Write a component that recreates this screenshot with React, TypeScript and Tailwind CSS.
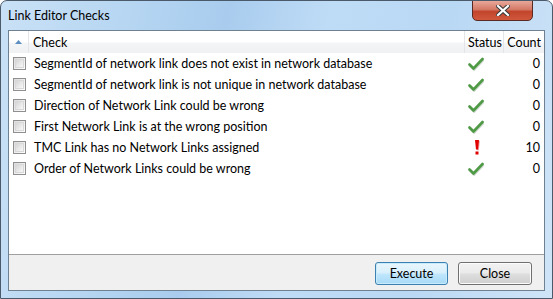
const checks = [
  { label: "SegmentId of network link does not exist in network database", ok: true, count: 0 },
  { label: "SegmentId of network link is not unique in network database", ok: true, count: 0 },
  { label: "Direction of Network Link could be wrong", ok: true, count: 0 },
  { label: "First Network Link is at the wrong position", ok: true, count: 0 },
  { label: "TMC Link has no Network Links assigned", ok: false, count: 10 },
  { label: "Order of Network Links could be wrong", ok: true, count: 0 },
];

function CheckMark() {
  return (
    <svg width="16" height="14" viewBox="0 0 16 14">
      <path d="M1.5 7.5 L5.5 11.5 L14.5 2" fill="none" stroke="#cfd8cf" strokeWidth="3" strokeLinecap="round" transform="translate(0.6 0.8)" />
      <path d="M1.5 7.5 L5.5 11.5 L14.5 2" fill="none" stroke="#4f9a45" strokeWidth="2.6" strokeLinecap="round" strokeLinejoin="round" />
    </svg>
  );
}

function Exclaim() {
  return (
    <svg width="8" height="17" viewBox="0 0 8 17">
      <path d="M2 1 H6 L5 10.5 H3 Z" fill="#f0a0a0" transform="translate(0.8 0.8)" />
      <path d="M2 1 H6 L5 10.5 H3 Z" fill="#e00000" />
      <rect x="2.5" y="12.5" width="3" height="3" fill="#e00000" />
    </svg>
  );
}

export default function App() {
  return (
    <div
      className="relative flex h-[299px] w-[553px] flex-col overflow-hidden rounded-t-[7px] border border-[#4a5a6a] bg-[linear-gradient(100deg,#c9e1f6_0%,#b3d4f1_25%,#a9ccee_38%,#bfdcf6_55%,#b9d8f4_75%,#cfe4f7_100%)]"
      style={{ fontFamily: 'Lato, "Noto Sans", sans-serif' }}
    >
      <div className="flex h-[29px] shrink-0 items-center pl-[7px] pt-[1px] text-[12.5px] text-black">
        Link Editor Checks
      </div>
      <button
        type="button"
        className="absolute right-[19px] top-[-1px] flex h-[21px] w-[61px] items-center justify-center rounded-b-[5px] border border-[#5a2a22] bg-[linear-gradient(#e8a89a_0%,#d47866_45%,#c2452c_55%,#d0583c_100%)]"
      >
        <svg width="14" height="11" viewBox="0 0 14 11">
          <path d="M2 1 L12 10 M12 1 L2 10" stroke="#3a3a3a" strokeWidth="4.2" strokeLinecap="square" />
          <path d="M2 1 L12 10 M12 1 L2 10" stroke="#ffffff" strokeWidth="2.2" strokeLinecap="square" />
        </svg>
      </button>

      <div className="mx-[7px] mb-[7px] flex flex-1 flex-col border border-[#6f8091] bg-[#f0f0f0]">
        <div className="flex h-[224px] flex-col border-b border-[#a0a0a0] bg-white">
          <div className="flex h-[22px] items-stretch bg-[linear-gradient(#ffffff_0%,#ffffff_50%,#f4f5f7_55%,#f0f1f3_100%)] text-[12.5px] text-black">
            <div className="flex w-[20px] items-center justify-center border-r border-[#e3e5e8]">
              <svg width="7" height="4" viewBox="0 0 7 4">
                <path d="M0 4 L3.5 0 L7 4 Z" fill="#5e8fc3" />
              </svg>
            </div>
            <div className="flex flex-1 items-center border-r border-[#e3e5e8] pl-[4px] pt-[2px]">Check</div>
            <div className="flex w-[39px] items-center border-r border-[#e3e5e8] pl-[3px] pt-[2px]">Status</div>
            <div className="flex w-[40px] items-center justify-end pr-[3px] pt-[2px]">Count</div>
          </div>
          {checks.map((c) => (
            <div key={c.label} className="flex h-[21px] items-center text-[12.5px] text-black">
              <div className="flex w-[20px] items-center justify-center pl-[1px]">
                <div className="h-[13px] w-[13px] border border-[#8f8f8f] bg-[linear-gradient(135deg,#dcdcdc,#ffffff)] p-[1px]">
                  <div className="h-full w-full border border-[#d8d8d8] bg-[linear-gradient(135deg,#d6d6d6,#f8f8f8)]" />
                </div>
              </div>
              <div className="flex-1 truncate pl-[5px] pt-[2px]">{c.label}</div>
              <div className="flex w-[39px] items-center pl-[3px]">{c.ok ? <CheckMark /> : <span className="pl-[5px]"><Exclaim /></span>}</div>
              <div className="w-[40px] pr-[4px] pt-[2px] text-right">{c.count}</div>
            </div>
          ))}
        </div>
        <div className="flex flex-1 items-center justify-end gap-[10px] pr-[12px] pt-[2px] text-[12.5px] text-black">
          <button
            type="button"
            className="h-[23px] w-[73px] rounded-[3px] border border-[#3c7fb1] bg-[linear-gradient(#eaf6fd_0%,#d9f0fc_45%,#bee6fd_55%,#a7d9f5_100%)] pt-[1px] shadow-[inset_0_0_0_1px_#c8ecfc]"
          >
            Execute
          </button>
          <button
            type="button"
            className="h-[23px] w-[74px] rounded-[3px] border border-[#707070] bg-[linear-gradient(#f2f2f2_0%,#ebebeb_45%,#dddddd_55%,#cfcfcf_100%)] pt-[1px] shadow-[inset_0_0_0_1px_#fcfcfc]"
          >
            Close
          </button>
        </div>
      </div>
    </div>
  );
}
